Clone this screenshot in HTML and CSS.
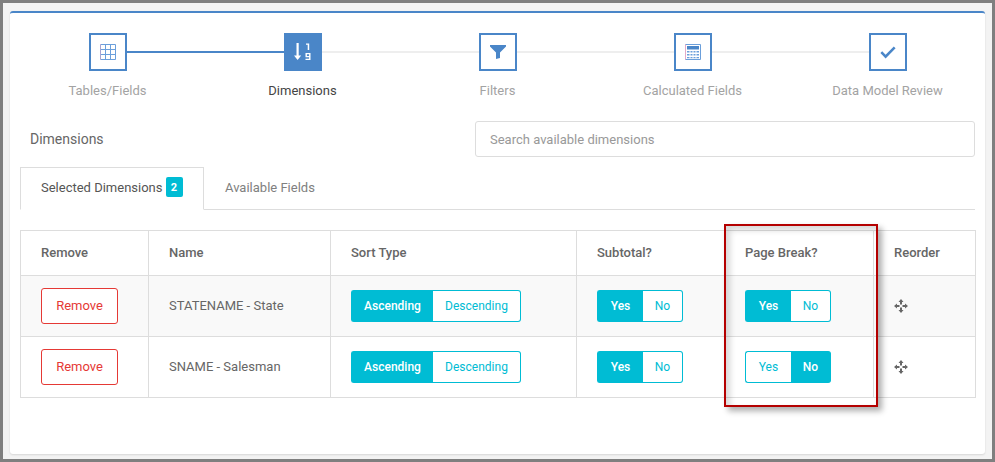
FILE: index.html
```html
<!DOCTYPE html>
<html lang="en">
<head>
<meta charset="utf-8">
<title>Dimensions</title>
<link rel="stylesheet" href="styles.css">
</head>
<body>
<div class="frame">
  <main class="card">
    <ol class="stepper">
      <li class="step done">
        <span class="step-icon">
          <svg width="16" height="16" viewBox="0 0 16 16"><path d="M.5.500h15v15H.5zM.5 5.500h15M.5 10.500h15M5.500.500v15M10.500.500v15" fill="none" stroke="#6b9fdb"/><path d="M0 0v16" stroke="#e3a9c8" stroke-width="1"/></svg>
        </span>
        <span class="step-label">Tables/Fields</span>
      </li>
      <li class="step current">
        <span class="step-icon">
          <svg width="18" height="18" viewBox="0 0 18 18"><path d="M2.500 0h2.200v12.500h2.500L3.600 17 0 12.500h2.500z" fill="#fff"/><path d="M12 .5h3.200v6.500h-1.500V1.800H12zM11.500 10h5v7h-5v-1.300h3.600v-1.500h-3.600zM12.900 11.300v1.700h2.200v-1.700z" fill="#fff" fill-rule="evenodd"/></svg>
        </span>
        <span class="step-label">Dimensions</span>
      </li>
      <li class="step">
        <span class="step-icon">
          <svg width="16" height="14" viewBox="0 0 16 14"><path d="M0 0h16v1.500L10 7.500V13l-4 1V7.500L0 1.500z" fill="#4a86c8"/></svg>
        </span>
        <span class="step-label">Filters</span>
      </li>
      <li class="step">
        <span class="step-icon">
          <svg width="16" height="16" viewBox="0 0 16 16"><path d="M.5.500h15v15H.5z" fill="#fff" stroke="#6b9fdb"/><path d="M.5.500v15" stroke="#e3a9c8"/><path d="M2 2h12v3.500H2z" fill="#4a86c8"/><path d="M2 7h12v1.500H2zM2 10h12v1.500H2zM2 13h12v1.200H2z" fill="#6b9fdb"/><path d="M5 6.500v8M8 6.500v8M11 6.500v8" stroke="#fff"/></svg>
        </span>
        <span class="step-label">Calculated Fields</span>
      </li>
      <li class="step">
        <span class="step-icon">
          <svg width="16" height="13" viewBox="0 0 16 13"><path d="M.4 7 2.200 5.200 5.600 8.700 13.800.4 15.600 2.200 5.600 12.500z" fill="#4a86c8"/></svg>
        </span>
        <span class="step-label">Data Model Review</span>
      </li>
    </ol>

    <div class="content">
      <div class="heading-row">
        <h2 class="heading">Dimensions</h2>
        <input class="search" type="text" placeholder="Search available dimensions">
      </div>

      <div class="tabs">
        <div class="tab active"><span class="tab-text">Selected Dimensions</span><span class="badge">2</span></div>
        <div class="tab"><span class="tab-text">Available Fields</span></div>
      </div>

      <div class="table-wrap">
        <table class="grid">
          <colgroup>
            <col class="c-remove"><col class="c-name"><col class="c-sort"><col class="c-sub"><col class="c-page"><col class="c-order">
          </colgroup>
          <thead>
            <tr><th>Remove</th><th>Name</th><th>Sort Type</th><th>Subtotal?</th><th>Page Break?</th><th>Reorder</th></tr>
          </thead>
          <tbody>
            <tr class="striped">
              <td><button class="remove">Remove</button></td>
              <td class="name">STATENAME - State</td>
              <td><div class="toggle"><span class="opt wide on">Ascending</span><span class="opt wide2">Descending</span></div></td>
              <td><div class="toggle"><span class="opt yn on">Yes</span><span class="opt yn">No</span></div></td>
              <td><div class="toggle"><span class="opt yn on">Yes</span><span class="opt yn">No</span></div></td>
              <td><svg class="move" width="14" height="14" viewBox="0 0 14 14"><path d="M7 0 9.500 3H8v3h3V4.500L14 7 11 9.500V8H8v3h1.500L7 14 4.500 11H6V8H3v1.500L0 7 3 4.500V6h3V3H4.500z" fill="#666"/><path d="M5.500 5.500h3v3h-3z" fill="#f9f9f9"/></svg></td>
            </tr>
            <tr>
              <td><button class="remove">Remove</button></td>
              <td class="name">SNAME - Salesman</td>
              <td><div class="toggle"><span class="opt wide on">Ascending</span><span class="opt wide2">Descending</span></div></td>
              <td><div class="toggle"><span class="opt yn on">Yes</span><span class="opt yn">No</span></div></td>
              <td><div class="toggle"><span class="opt yn">Yes</span><span class="opt yn on">No</span></div></td>
              <td><svg class="move" width="14" height="14" viewBox="0 0 14 14"><path d="M7 0 9.500 3H8v3h3V4.500L14 7 11 9.500V8H8v3h1.500L7 14 4.500 11H6V8H3v1.500L0 7 3 4.500V6h3V3H4.500z" fill="#666"/><path d="M5.500 5.500h3v3h-3z" fill="#fff"/></svg></td>
            </tr>
          </tbody>
        </table>
        <div class="callout"></div>
      </div>
    </div>
  </main>
</div>
</body>
</html>
```

FILE: styles.css
```css
* { box-sizing: border-box; }

html, body {
  margin: 0;
  height: 100%;
}

body {
  font-family: Roboto, "Liberation Sans", sans-serif;
  font-size: 13px;
  color: #666;
  overflow: hidden;
}

.frame {
  width: 995px;
  height: 462px;
  background: #f3f3f3;
  border: 3px solid #7f7f7f;
  padding: 8px 7px 5px 7px;
}

.card {
  height: 100%;
  background: #fff;
  border-top: 2px solid #4a86c8;
  border-radius: 3px;
  box-shadow: 0 1px 2px rgba(0, 0, 0, .12);
}

/* stepper */
.stepper {
  list-style: none;
  margin: 0;
  padding: 20px 0 0;
  display: grid;
  grid-template-columns: repeat(5, 195px);
}

.step {
  position: relative;
  display: flex;
  flex-direction: column;
  align-items: center;
  gap: 12px;
  color: #a3a3a3;
}

.step::after {
  content: "";
  position: absolute;
  left: 50%;
  width: 100%;
  top: 18px;
  height: 2px;
  background: #eee;
}

.step:last-child::after { display: none; }
.step.done::after { background: #4a86c8; }

.step-icon {
  position: relative;
  z-index: 1;
  width: 38px;
  height: 38px;
  display: flex;
  align-items: center;
  justify-content: center;
  background: #fff;
  border: 2px solid #4a86c8;
}

.step.current .step-icon { background: #4a86c8; }
.step.current { color: #444; }

.step-label {
  line-height: 15px;
  white-space: nowrap;
}

/* heading row */
.content { padding: 0 10px; }

.heading-row {
  margin-top: 23px;
  display: flex;
  align-items: center;
  justify-content: space-between;
}

.heading {
  margin: 0 0 0 10px;
  font-size: 14px;
  font-weight: 400;
  color: #666;
}

.search {
  width: 500px;
  height: 36px;
  padding: 0 14px;
  border: 1px solid #ddd;
  border-radius: 3px;
  font: inherit;
  color: #666;
}

.search::placeholder { color: #999; opacity: 1; }

/* tabs */
.tabs {
  margin-top: 10px;
  height: 43px;
  display: flex;
  border-bottom: 1px solid #ddd;
}

.tab {
  height: 43px;
  padding: 0 20px 4px;
  display: flex;
  align-items: center;
  gap: 3px;
  color: #808080;
  border: 1px solid transparent;
  border-bottom: 0;
  white-space: nowrap;
}

.tab.active {
  width: 184px;
  padding-bottom: 3px;
  color: #555;
  background: #fff;
  border-color: #ddd;
  border-bottom: 1px solid #fff;
}

.badge {
  width: 17px;
  height: 20px;
  display: inline-flex;
  align-items: center;
  justify-content: center;
  background: #00bcd4;
  color: #fff;
  border-radius: 2px;
  font-size: 11px;
  font-weight: 700;
}

/* table */
.table-wrap {
  position: relative;
  margin-top: 20px;
}

.grid {
  width: 955px;
  table-layout: fixed;
  border-collapse: collapse;
}

.c-remove { width: 128px; }
.c-name { width: 182px; }
.c-sort { width: 246px; }
.c-sub { width: 148px; }
.c-page { width: 149px; }
.c-order { width: 102px; }

.grid th,
.grid td {
  border: 1px solid #ddd;
  padding: 0 20px;
  text-align: left;
  white-space: nowrap;
}

.grid th {
  height: 45px;
  padding-bottom: 2px;
  font-weight: 500;
  color: #666;
}

.grid td { height: 61px; }
.grid td.name { padding-bottom: 2px; }
.striped td { background: #f9f9f9; }

.remove {
  width: 77px;
  height: 36px;
  display: block;
  padding: 0 0 2px;
  background: #fff;
  border: 1px solid #e53935;
  border-radius: 3px;
  color: #e53935;
  font: inherit;
}

.toggle { display: flex; }

.opt {
  height: 32px;
  display: flex;
  align-items: center;
  justify-content: center;
  background: #fff;
  color: #00bcd4;
  border: 1px solid #00bcd4;
  font-size: 12px;
}

.opt:first-child { border-radius: 3px 0 0 3px; border-right: 0; }
.opt:last-child { border-radius: 0 3px 3px 0; border-left: 0; }

.opt.on {
  background: #00bcd4;
  color: #fff;
  font-weight: 500;
}

.opt.wide { width: 82px; }
.opt.wide2 { width: 88px; }
.opt.yn:first-child { width: 46px; }
.opt.yn:last-child { width: 40px; }

.move { display: block; }

.callout {
  position: absolute;
  left: 704px;
  top: -6px;
  width: 154px;
  height: 183px;
  border: 2px solid #b40000;
  box-shadow: 4px 4px 6px rgba(0, 0, 0, .32), inset 4px 4px 6px rgba(0, 0, 0, .16);
  pointer-events: none;
}
```
